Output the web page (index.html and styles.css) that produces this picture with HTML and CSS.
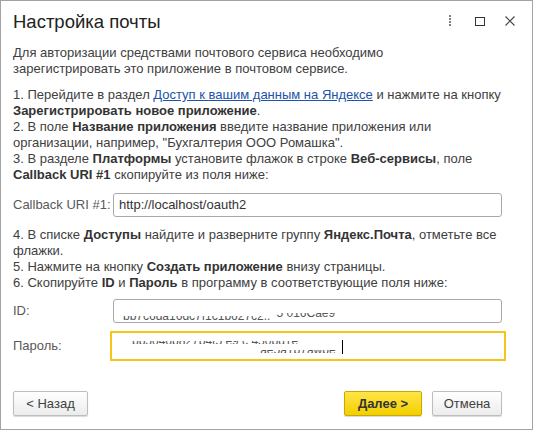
FILE: index.html
```html
<!DOCTYPE html>
<html lang="ru">
<head>
<meta charset="utf-8">
<link rel="stylesheet" href="styles.css">
</head>
<body>
<div class="window">
  <div class="header">
    <div class="title">Настройка почты</div>
    <div class="controls">
      <svg class="ic" width="14" height="14" viewBox="0 0 14 14"><rect x="6" y="1" width="2" height="2" fill="#808080"/><rect x="6" y="4" width="2" height="2" fill="#808080"/><rect x="6" y="7" width="2" height="2" fill="#808080"/><rect x="6" y="10" width="2" height="2" fill="#808080"/></svg>
      <svg class="ic" width="14" height="14" viewBox="0 0 14 14"><rect x="2.5" y="3.5" width="9" height="8" fill="none" stroke="#333" stroke-width="1"/></svg>
      <svg class="ic" width="14" height="14" viewBox="0 0 14 14"><path d="M2.5 2.5 L11.5 11.5 M11.5 2.5 L2.5 11.5" stroke="#444" stroke-width="1.1" fill="none"/></svg>
    </div>
  </div>
  <div class="content">
    <p class="para">Для авторизации средствами почтового сервиса необходимо<br>зарегистрировать это приложение в почтовом сервисе.</p>
    <p class="para">1. Перейдите в раздел <a class="link" href="#">Доступ к вашим данным на Яндексе</a> и нажмите на кнопку <b>Зарегистрировать новое приложение</b>.<br>2. В поле <b>Название приложения</b> введите название приложения или организации, например, "Бухгалтерия ООО Ромашка".<br>3. В разделе <b>Платформы</b> установите флажок в строке <b>Веб-сервисы</b>, поле <b>Callback URI #1</b> скопируйте из поля ниже:</p>
    <div class="row row-cb">
      <label class="label">Callback URI #1:</label>
      <div class="input">http://localhost/oauth2</div>
    </div>
    <p class="para para-last">4. В списке <b>Доступы</b> найдите и разверните группу <b>Яндекс.Почта</b>, отметьте все флажки.<br>5. Нажмите на кнопку <b>Создать приложение</b> внизу страницы.<br>6. Скопируйте <b>ID</b> и <b>Пароль</b> в программу в соответствующие поля ниже:</p>
    <div class="row row-id">
      <label class="label">ID:</label>
      <div class="input input-id"><span class="clip clip-a">bb7c6da16dc7f1c1b627c2..</span><span class="clip clip-b">5 016Cae9</span></div>
    </div>
    <div class="row row-pw">
      <label class="label">Пароль:</label>
      <div class="focus"><div class="input input-pw"><span class="clip clip-c">bb5046b827b4f5 e9 c 450bd1e</span><span class="clip clip-d">ae5a1b7awbe</span><span class="caret"></span></div></div>
    </div>
  </div>
  <div class="footer">
    <button class="btn btn-back">&lt; Назад</button>
    <div class="spacer"></div>
    <button class="btn btn-next">Далее &gt;</button>
    <button class="btn btn-cancel">Отмена</button>
  </div>
</div>
</body>
</html>
```
FILE: styles.css
```css
* { box-sizing: border-box; }
html, body { margin: 0; padding: 0; background: #fff; }
body { font-family: Arial, "Liberation Sans", sans-serif; color: #404040; width: 533px; height: 430px; }
.window { width: 533px; height: 430px; border: 1px solid #a3a3a3; display: flex; flex-direction: column; background: #fff; }
.header { display: flex; align-items: center; height: 38px; padding: 4px 15px 0 12px; }
.title { font-size: 18.5px; color: #222; flex: 1; }
.controls { display: flex; gap: 16px; align-items: center; margin-top: -2px; }
.ic { display: block; }
.content { padding: 6px 30px 0 12px; font-size: 13px; line-height: 16px; }
.para { margin: 0 -8px 10px 0; }
.para-last { margin-bottom: 8px; }
.para b { color: #333; }
.link { color: #1b54a8; text-decoration: underline; }
.row { display: flex; align-items: center; }
.label { width: 100px; color: #595959; font-size: 13px; }
.input { flex: 1; height: 24px; border: 1px solid #a9a9a9; border-radius: 3px; padding: 0 5px; display: flex; align-items: center; font-size: 13px; color: #333; overflow: hidden; white-space: nowrap; }
.row-cb { margin: 0 0 10px 0; }
.row-id { margin: 0; }
.row-pw { margin: 8px 0 0 0; }
.row-pw .label { width: 97px; }
.focus { flex: 1; border: 2px solid #f5c518; height: 30px; padding: 1px 2px 0 2px; margin-right: -4px; }
.input-pw { height: 24px; border: none; align-items: flex-start; padding-left: 18px; }
.input-id { align-items: flex-start; padding-left: 9px; }
.clip { display: inline-block; overflow: hidden; color: #555; font-size: 12px; vertical-align: top; }
.clip-a { height: 4px; line-height: 0px; margin-top: 16px; }
.clip-b { height: 5px; line-height: 1px; margin-top: 13px; margin-left: 6px; }
.clip-c { height: 3px; line-height: 0px; margin-top: 7px; }
.clip-d { height: 3px; line-height: 0px; margin-top: 16px; margin-left: -38px; }
.caret { display: inline-block; width: 1px; height: 14px; background: #000; margin-top: 6px; margin-left: 6px; }
.footer { margin-top: auto; display: flex; align-items: center; padding: 0 30px 13px 12px; gap: 10px; }
.spacer { flex: 1; }
.btn { height: 25px; font-family: Arial, "Liberation Sans", sans-serif; font-size: 13px; color: #404040; border: 1px solid #bdbdbd; border-radius: 2px; background: linear-gradient(#ffffff, #ececec); box-shadow: 0 1px 1px rgba(0,0,0,0.15); padding: 0; }
.btn-back { width: 75px; }
.btn-next { width: 78px; font-weight: bold; color: #333; background: linear-gradient(#ffe547, #f2cf00); border-color: #c9a800; }
.btn-cancel { width: 70px; }
```
